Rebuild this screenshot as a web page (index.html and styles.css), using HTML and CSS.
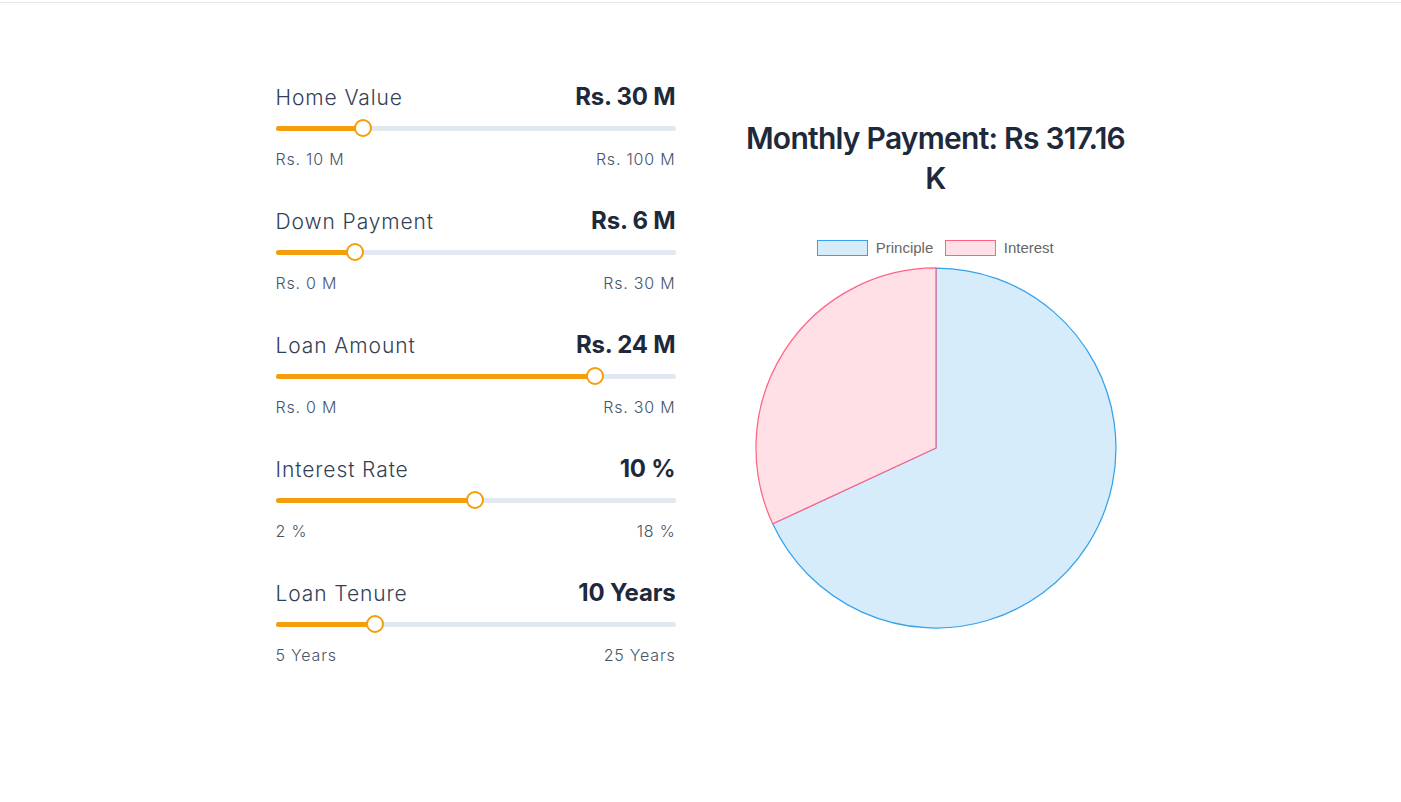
FILE: index.html
```html
<!DOCTYPE html>
<html lang="en">
<head>
<meta charset="utf-8">
<title>Mortgage Calculator</title>
<link rel="stylesheet" href="styles.css">
</head>
<body>
<div class="topbar"></div>
<main class="wrap">
  <section class="controls">
    <div class="field">
      <div class="field-head"><span class="field-label">Home Value</span><span class="field-value">Rs. 30 M</span></div>
      <div class="slider"><div class="track"><div class="fill" style="width:22.2%"></div></div><div class="thumb" style="left:22.2%"></div></div>
      <div class="field-range"><span>Rs. 10 M</span><span>Rs. 100 M</span></div>
    </div>
    <div class="field">
      <div class="field-head"><span class="field-label">Down Payment</span><span class="field-value">Rs. 6 M</span></div>
      <div class="slider"><div class="track"><div class="fill" style="width:20%"></div></div><div class="thumb" style="left:20%"></div></div>
      <div class="field-range"><span>Rs. 0 M</span><span>Rs. 30 M</span></div>
    </div>
    <div class="field">
      <div class="field-head"><span class="field-label">Loan Amount</span><span class="field-value">Rs. 24 M</span></div>
      <div class="slider"><div class="track"><div class="fill" style="width:80%"></div></div><div class="thumb" style="left:80%"></div></div>
      <div class="field-range"><span>Rs. 0 M</span><span>Rs. 30 M</span></div>
    </div>
    <div class="field">
      <div class="field-head"><span class="field-label">Interest Rate</span><span class="field-value">10 %</span></div>
      <div class="slider"><div class="track"><div class="fill" style="width:50%"></div></div><div class="thumb" style="left:50%"></div></div>
      <div class="field-range"><span>2 %</span><span>18 %</span></div>
    </div>
    <div class="field">
      <div class="field-head"><span class="field-label">Loan Tenure</span><span class="field-value">10 Years</span></div>
      <div class="slider"><div class="track"><div class="fill" style="width:25%"></div></div><div class="thumb" style="left:25%"></div></div>
      <div class="field-range"><span>5 Years</span><span>25 Years</span></div>
    </div>
  </section>
  <section class="result">
    <h2 class="result-title">Monthly Payment: Rs 317.16 K</h2>
    <div class="chart">
      <div class="legend">
        <div class="legend-item"><span class="legend-box principle"></span><span class="legend-text">Principle</span></div>
        <div class="legend-item"><span class="legend-box interest"></span><span class="legend-text">Interest</span></div>
      </div>
      <svg class="pie" width="362" height="362" viewBox="0 0 362 362">
        <path d="M181,181 L181,1 A180,180 0 1 1 17.7,256.8 Z" fill="#d7ecfb" stroke="rgb(54,162,235)" stroke-width="1.25" stroke-linejoin="round"/>
        <path d="M181,181 L17.7,256.8 A180,180 0 0 1 181,1 Z" fill="#ffe0e6" stroke="rgb(255,99,132)" stroke-width="1.25" stroke-linejoin="round"/>
      </svg>
    </div>
  </section>
</main>
</body>
</html>
```
FILE: styles.css
```css
* { box-sizing: border-box; }
html, body { margin: 0; padding: 0; background: #fff; }
body { font-family: Inter, "Noto Sans", sans-serif; color: #334155; }

.topbar { height: 3px; border-bottom: 1px solid #e3e6ec; }

.wrap {
  max-width: 872px;
  margin: 0 auto;
  padding: 78px 0 0 11px;
  display: flex;
  align-items: center;
  gap: 60px;
}

.controls { width: 400px; display: flex; flex-direction: column; gap: 34.5px; }

.field-head { display: flex; justify-content: space-between; align-items: baseline; height: 32px; }
.field-label { font-size: 21px; line-height: 28px; font-weight: 300; letter-spacing: 0.9px; color: #334155; }
.field-value { font-size: 24px; line-height: 32px; font-weight: 700; color: #1e293b; letter-spacing: -0.2px; }

.slider { position: relative; height: 18px; margin-top: 6px; display: flex; align-items: center; }
.track { width: 100%; height: 5px; border-radius: 3px; background: #e2e8f0; overflow: hidden; }
.fill { height: 100%; background: #f59e0b; }
.thumb {
  position: absolute; top: 0;
  width: 18px; height: 18px; margin-left: -10px;
  border-radius: 50%; background: #fff; border: 2px solid #f59e0b;
}

.field-range { display: flex; justify-content: space-between; margin-top: 9.5px; font-size: 16px; line-height: 24px; font-weight: 300; letter-spacing: 0.05em; color: #475569; }

.result { width: 400px; display: flex; flex-direction: column; align-items: center; }
.result-title {
  margin: 0; font-size: 30px; line-height: 40px; font-weight: 600; color: #1e293b;
  text-align: center; width: 400px; letter-spacing: -0.025em;
}

.chart { margin-top: 42px; display: flex; flex-direction: column; align-items: center; }
.legend { display: flex; gap: 12px; height: 16px; align-items: center; font-family: "Liberation Sans", Arial, sans-serif; font-size: 15px; color: #666; }
.legend-item { display: flex; align-items: center; gap: 7.5px; }
.legend-box { width: 51px; height: 16px; border: 1.25px solid; }
.legend-box.principle { background: #d7ecfb; border-color: rgb(54,162,235); }
.legend-box.interest { background: #ffe0e6; border-color: rgb(255,99,132); }
.legend-text { line-height: 16px; }

.pie { display: block; margin-top: 11px; }
```
